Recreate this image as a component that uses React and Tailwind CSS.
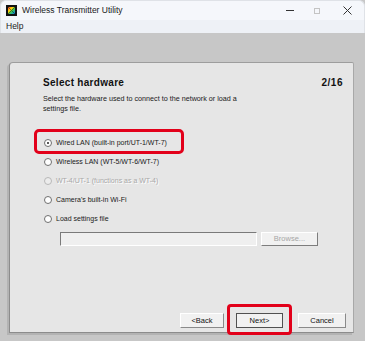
import React from "react";

function Radio({ checked, disabled }) {
  return (
    <span
      className={`relative inline-block w-[8px] h-[8px] rounded-full border ${
        disabled ? "border-[#b8b8b8] bg-[#ececec]" : "border-[#6f6f6f] bg-white"
      } shrink-0`}
    >
      {checked && (
        <span className="absolute left-[2px] top-[2px] w-[2px] h-[2px] rounded-full bg-[#222]" />
      )}
    </span>
  );
}

function Row({ label, checked, disabled, highlight }) {
  return (
    <div className="relative flex items-center h-[19px]">
      {highlight && (
        <div className="absolute left-[-10px] top-[-4px] w-[150px] h-[25px] border-[3px] border-[#e2001a] rounded-[5px]" />
      )}
      <Radio checked={checked} disabled={disabled} />
      <span
        className={`ml-[4px] text-[7px] leading-[10px] whitespace-nowrap ${
          disabled ? "text-[#a8a8a8] [text-shadow:1px_1px_0_#ffffff]" : "text-[#1a1a1a]"
        }`}
      >
        {label}
      </span>
    </div>
  );
}

function Btn({ children, className = "", dark }) {
  return (
    <div
      className={`h-[15px] flex items-center justify-center text-[7.5px] text-[#111] bg-[#f1f1f1] border ${
        dark
          ? "border-[#505050]"
          : "border-t-[#ffffff] border-l-[#ffffff] border-b-[#8a8a8a] border-r-[#8a8a8a]"
      } ${className}`}
    >
      {children}
    </div>
  );
}

export default function App() {
  return (
    <div
      className="w-[365px] h-[341px] bg-[#c7c7c7] flex flex-col overflow-hidden"
      style={{ fontFamily: '"Liberation Sans", Arial, sans-serif' }}
    >
      {/* Title bar */}
      <div className="h-[20px] bg-[#f5f7fb] flex items-center rounded-t-[6px] border-t border-x border-[#dfe2e7]">
        <svg width="11" height="11" viewBox="0 0 11 11" className="ml-[5px]">
          <defs>
            <linearGradient id="g1" x1="0" y1="0" x2="1" y2="1">
              <stop offset="0" stopColor="#ff3b30" />
              <stop offset="0.35" stopColor="#ffd60a" />
              <stop offset="0.6" stopColor="#34c759" />
              <stop offset="1" stopColor="#0a84ff" />
            </linearGradient>
          </defs>
          <rect x="0" y="0" width="11" height="11" fill="#111" />
          <rect x="2" y="2" width="7" height="7" fill="url(#g1)" />
          <path d="M2 2 L9 9 M9 2 L2 9" stroke="#111" strokeWidth="1" opacity="0.5" />
        </svg>
        <span className="ml-[5px] text-[8.5px] text-[#1a1a1a]">Wireless Transmitter Utility</span>
        <div className="flex-1" />
        <div className="w-[8px] h-[1px] bg-[#333] mr-[20px]" />
        <div className="w-[6px] h-[6px] border border-[#c4c4c4] mr-[23px]" />
        <svg width="9" height="9" viewBox="0 0 9 9" className="mr-[12px]">
          <path d="M0.5 0.5 L8.5 8.5 M8.5 0.5 L0.5 8.5" stroke="#333" strokeWidth="1" />
        </svg>
      </div>
      {/* Menu */}
      <div className="h-[13px] bg-[#eef1f6] flex items-center border-x border-[#dfe2e7]">
        <span className="ml-[5px] text-[8.5px] text-[#1a1a1a]">Help</span>
      </div>

      {/* Panel */}
      <div className="mt-[29px] ml-[9px] mr-[11px] h-[271px] bg-[#e6e6e6] rounded-tl-[4px] rounded-tr-[2px] border border-t-[#9d9d9d] border-l-[#8c8c8c] border-r-[#a8a8a8] border-b-[#8c8c8c] shadow-[-2px_2px_0_#b3b3b3] flex flex-col">
        <div className="mt-[12px] h-[14px] flex items-center justify-between pl-[33px] pr-[10px]">
          <span className="text-[10px] font-bold tracking-[0.3px] text-[#111]">Select hardware</span>
          <span className="text-[10px] font-bold tracking-[0.5px] text-[#111]">2/16</span>
        </div>
        <div className="mt-[5px] pl-[33px] text-[7.2px] leading-[10px] text-[#1a1a1a] w-[260px]">
          Select the hardware used to connect to the network or load a
          <br />
          settings file.
        </div>
        <div className="mt-[19px] pl-[34px] flex flex-col">
          <Row label="Wired LAN (built-in port/UT-1/WT-7)" checked highlight />
          <Row label="Wireless LAN (WT-5/WT-6/WT-7)" />
          <Row label="WT-4/UT-1 (functions as a WT-4)" disabled />
          <Row label="Camera's built-in Wi-Fi" />
          <Row label="Load settings file" />
        </div>
        <div className="mt-[4px] pl-[50px] flex items-center">
          <div className="w-[197px] h-[14px] bg-[#efefef] border border-t-[#7a7a7a] border-l-[#7a7a7a] border-b-[#ffffff] border-r-[#ffffff]" />
          <div className="ml-[4px] w-[57px] h-[14px] bg-[#f1f1f1] border border-t-[#ffffff] border-l-[#ffffff] border-b-[#7d7d7d] border-r-[#7d7d7d] flex items-center justify-center text-[7.5px] text-[#a6a6a6]">
            Browse...
          </div>
        </div>
        <div className="mt-[67px] flex items-center">
          <Btn className="ml-[170px] w-[44px]">&lt;Back</Btn>
          <div className="relative ml-[12px]">
            <div className="absolute left-[-9px] top-[-9px] w-[65px] h-[31px] border-[3px] border-[#e2001a] rounded-[4px]" />
            <Btn dark className="w-[47px]">Next&gt;</Btn>
          </div>
          <Btn className="ml-[15px] w-[48px]">Cancel</Btn>
        </div>
      </div>
    </div>
  );
}
